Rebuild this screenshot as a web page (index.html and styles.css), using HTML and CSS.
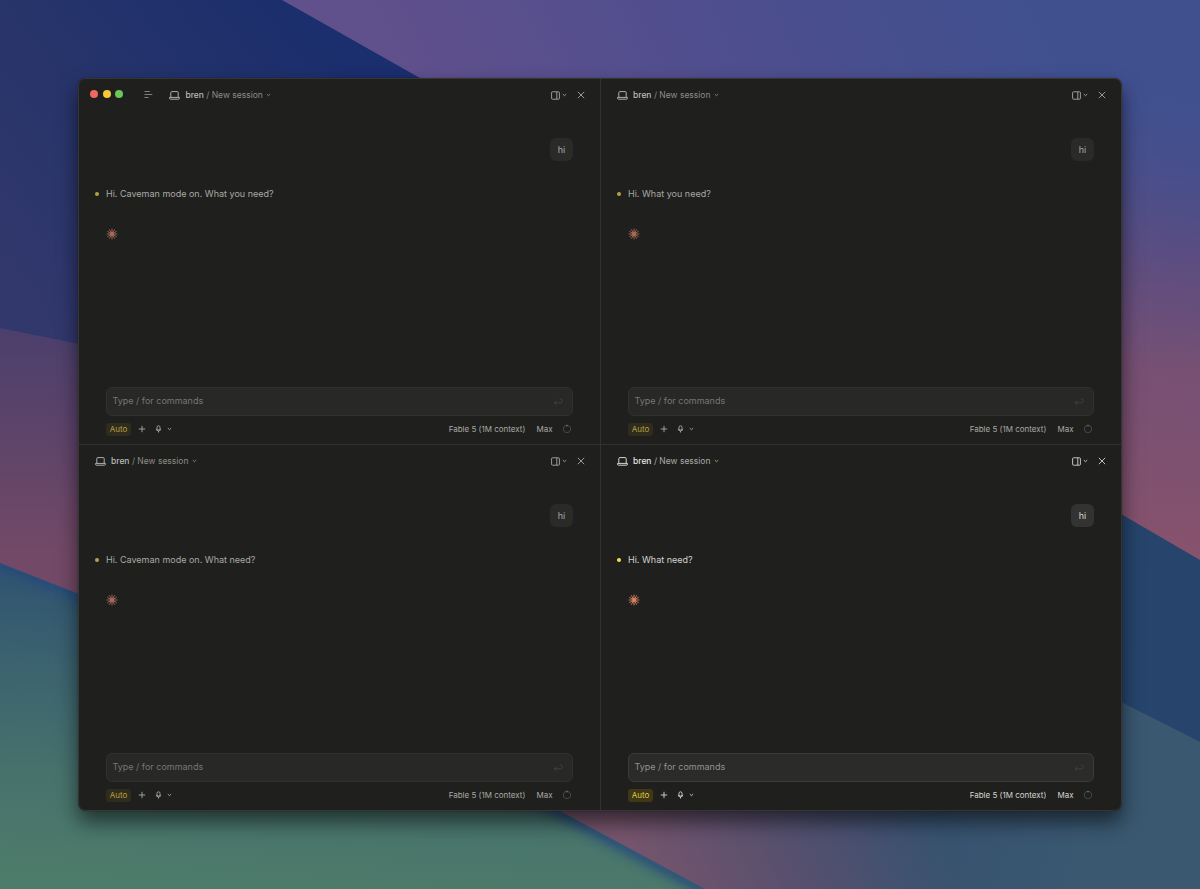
FILE: index.html
```html
<!DOCTYPE html>
<html lang="en">
<head>
  <meta charset="UTF-8" />
  <meta name="viewport" content="width=device-width, initial-scale=1.0" />
  <title>Sessions</title>
  <link rel="stylesheet" href="styles.css">
</head>

<body>
  <!-- Wallpaper -->
  <svg class="wallpaper" viewBox="0 0 1200 889" preserveAspectRatio="none" aria-hidden="true">
    <defs>
      <linearGradient id="navy" gradientUnits="userSpaceOnUse" x1="330" y1="40" x2="0" y2="300">
        <stop offset="0" stop-color="#1b2e6d" />
        <stop offset="0.55" stop-color="#27346a" />
        <stop offset="1" stop-color="#33386c" />
      </linearGradient>
      <linearGradient id="violet" gradientUnits="userSpaceOnUse" x1="440" y1="150" x2="980" y2="-100">
        <stop offset="0" stop-color="#60508c" />
        <stop offset="0.5" stop-color="#4f4e8e" />
        <stop offset="1" stop-color="#40508f" />
      </linearGradient>
      <linearGradient id="rose" gradientUnits="userSpaceOnUse" x1="1175" y1="100" x2="1125" y2="540">
        <stop offset="0" stop-color="#4c4e8b" stop-opacity="0" />
        <stop offset="0.35" stop-color="#5b4d81" />
        <stop offset="0.6" stop-color="#765074" />
        <stop offset="1" stop-color="#86526d" />
      </linearGradient>
      <linearGradient id="plum" x1="0" y1="0" x2="0" y2="1">
        <stop offset="0" stop-color="#4b3f6c" />
        <stop offset="0.6" stop-color="#724967" />
        <stop offset="1" stop-color="#724967" />
      </linearGradient>
      <linearGradient id="green" gradientUnits="userSpaceOnUse" x1="80" y1="570" x2="60" y2="880">
        <stop offset="0" stop-color="#2f5370" />
        <stop offset="0.3" stop-color="#3b626f" />
        <stop offset="0.65" stop-color="#46716c" />
        <stop offset="1" stop-color="#4e7c6a" />
      </linearGradient>
      <linearGradient id="dusk" gradientUnits="userSpaceOnUse" x1="640" y1="870" x2="900" y2="740">
        <stop offset="0" stop-color="#76546c" />
        <stop offset="0.45" stop-color="#58506e" />
        <stop offset="1" stop-color="#36506f" />
      </linearGradient>
      <linearGradient id="teal" gradientUnits="userSpaceOnUse" x1="900" y1="740" x2="1110" y2="810">
        <stop offset="0" stop-color="#3a5870" stop-opacity="0" />
        <stop offset="1" stop-color="#3a5870" />
      </linearGradient>
      <linearGradient id="blue" x1="0" y1="0" x2="0" y2="1">
        <stop offset="0" stop-color="#26436c" />
        <stop offset="1" stop-color="#26456c" />
      </linearGradient>
      <clipPath id="hill">
        <path d="M0 563L79 594L300 690L560 811L705 889H0Z" />
      </clipPath>
      <filter id="soft" x="-5%" y="-20%" width="110%" height="140%">
        <feGaussianBlur stdDeviation="6" />
      </filter>
    </defs>
    <rect width="1200" height="889" fill="url(#violet)" />
    <rect x="1000" width="200" height="600" fill="url(#rose)" />
    <path d="M0 0H282L420 78L700 240V600H0Z" fill="url(#navy)" />
    <path d="M0 328L79 344L400 420V700H0Z" fill="url(#plum)" />
    <path d="M600 300L1121 514L1200 560V889H600Z" fill="url(#blue)" />
    <path d="M500 700H1117L1200 742V889H500Z" fill="url(#dusk)" />
    <path d="M900 600L1117 700L1200 742V889H850Z" fill="url(#teal)" />
    <g clip-path="url(#hill)">
      <path d="M0 563L79 594L300 690L560 811L705 889H0Z" fill="url(#green)" />
      <path d="M-40 547L0 563L79 594L300 690L560 811L745 911" fill="none" stroke="#27497a" stroke-width="12" filter="url(#soft)" />
    </g>
  </svg>

  <!-- Icons -->
  <svg class="sprite" aria-hidden="true">
    <symbol id="i-laptop" viewBox="0 0 11 9">
      <path d="M1.8 6.3V1.6Q1.8 .6 2.8 .6H8.2Q9.2 .6 9.2 1.6V6.3M.6 6.4H10.4V7.4Q10.4 8.2 9.6 8.2H1.4Q.6 8.2 .6 7.4Z" />
    </symbol>
    <symbol id="i-menu" viewBox="0 0 9 8">
      <path d="M.5 1.5H5.8M.5 4.5H8.3M.5 7.5H4.6" />
    </symbol>
    <symbol id="i-chevron" viewBox="0 0 5 4">
      <path d="M.8 1.1L2.5 2.7L4.2 1.1" />
    </symbol>
    <symbol id="i-panel" viewBox="0 0 9 9">
      <rect x=".6" y=".8" width="7.8" height="7.4" rx=".8" />
      <path d="M5.8 .8V8.2" />
    </symbol>
    <symbol id="i-close" viewBox="0 0 8 8">
      <path d="M.8 .8L7.2 7.2M7.2 .8L.8 7.2" />
    </symbol>
    <symbol id="i-plus" viewBox="0 0 8 8">
      <path d="M4 .8V7.2M.8 4H7.2" />
    </symbol>
    <symbol id="i-mic" viewBox="0 0 7 8">
      <rect x="2" y=".8" width="3" height="4.2" rx="1.5" />
      <path d="M1.2 3.8Q1.2 5.9 3.5 5.9Q5.8 5.9 5.8 3.8M3.5 5.9V7.5" />
    </symbol>
    <symbol id="i-return" viewBox="0 0 10 8">
      <path d="M6.7 1H7.8Q9 1 9 2.2V3.6Q9 4.8 7.8 4.8H1.3M3.3 2.7L1.2 4.8L3.3 6.9" />
    </symbol>
    <symbol id="i-ring" viewBox="0 0 10 10">
      <circle cx="5" cy="5" r="3.7" />
      <path class="ring-mark" d="M5 .8V2.4" />
    </symbol>
    <symbol id="i-burst" viewBox="0 0 12 12">
      <circle class="burst-core" cx="6" cy="6" r="2.2" />
      <path d="M6 .6V11.4M.6 6H11.4M3.3 1.3L8.7 10.7M8.7 1.3L3.3 10.7M1.3 3.3L10.7 8.7M10.7 3.3L1.3 8.7" />
    </symbol>
  </svg>

  <div class="window">
    <section class="pane">
      <header class="pane-header">
        <div class="traffic">
          <span class="light red"></span>
          <span class="light yellow"></span>
          <span class="light green"></span>
        </div>
        <svg class="icon menu"><use href="#i-menu" /></svg>
        <svg class="icon laptop"><use href="#i-laptop" /></svg>
        <div class="title"><b>bren</b> / New session</div>
        <svg class="icon chevron"><use href="#i-chevron" /></svg>
        <div class="actions">
          <svg class="icon panel"><use href="#i-panel" /></svg>
          <svg class="icon chevron"><use href="#i-chevron" /></svg>
          <svg class="icon close"><use href="#i-close" /></svg>
        </div>
      </header>
      <div class="chat">
        <div class="bubble">hi</div>
        <div class="reply"><span class="dot"></span>Hi. Caveman mode on. What you need?</div>
        <svg class="burst"><use href="#i-burst" /></svg>
      </div>
      <div class="prompt"><span>Type / for commands</span><svg class="icon return"><use href="#i-return" /></svg></div>
      <footer class="toolbar">
        <span class="mode">Auto</span>
        <svg class="icon plus"><use href="#i-plus" /></svg>
        <svg class="icon mic"><use href="#i-mic" /></svg>
        <svg class="icon chevron"><use href="#i-chevron" /></svg>
        <span class="model">Fable 5 (1M context)</span>
        <span class="effort">Max</span>
        <svg class="icon ring"><use href="#i-ring" /></svg>
      </footer>
    </section>

    <section class="pane">
      <header class="pane-header">
        <svg class="icon laptop"><use href="#i-laptop" /></svg>
        <div class="title"><b>bren</b> / New session</div>
        <svg class="icon chevron"><use href="#i-chevron" /></svg>
        <div class="actions">
          <svg class="icon panel"><use href="#i-panel" /></svg>
          <svg class="icon chevron"><use href="#i-chevron" /></svg>
          <svg class="icon close"><use href="#i-close" /></svg>
        </div>
      </header>
      <div class="chat">
        <div class="bubble">hi</div>
        <div class="reply"><span class="dot"></span>Hi. What you need?</div>
        <svg class="burst"><use href="#i-burst" /></svg>
      </div>
      <div class="prompt"><span>Type / for commands</span><svg class="icon return"><use href="#i-return" /></svg></div>
      <footer class="toolbar">
        <span class="mode">Auto</span>
        <svg class="icon plus"><use href="#i-plus" /></svg>
        <svg class="icon mic"><use href="#i-mic" /></svg>
        <svg class="icon chevron"><use href="#i-chevron" /></svg>
        <span class="model">Fable 5 (1M context)</span>
        <span class="effort">Max</span>
        <svg class="icon ring"><use href="#i-ring" /></svg>
      </footer>
    </section>

    <section class="pane">
      <header class="pane-header">
        <svg class="icon laptop"><use href="#i-laptop" /></svg>
        <div class="title"><b>bren</b> / New session</div>
        <svg class="icon chevron"><use href="#i-chevron" /></svg>
        <div class="actions">
          <svg class="icon panel"><use href="#i-panel" /></svg>
          <svg class="icon chevron"><use href="#i-chevron" /></svg>
          <svg class="icon close"><use href="#i-close" /></svg>
        </div>
      </header>
      <div class="chat">
        <div class="bubble">hi</div>
        <div class="reply"><span class="dot"></span>Hi. Caveman mode on. What need?</div>
        <svg class="burst"><use href="#i-burst" /></svg>
      </div>
      <div class="prompt"><span>Type / for commands</span><svg class="icon return"><use href="#i-return" /></svg></div>
      <footer class="toolbar">
        <span class="mode">Auto</span>
        <svg class="icon plus"><use href="#i-plus" /></svg>
        <svg class="icon mic"><use href="#i-mic" /></svg>
        <svg class="icon chevron"><use href="#i-chevron" /></svg>
        <span class="model">Fable 5 (1M context)</span>
        <span class="effort">Max</span>
        <svg class="icon ring"><use href="#i-ring" /></svg>
      </footer>
    </section>

    <!-- Focused pane -->
    <section class="pane active">
      <header class="pane-header">
        <svg class="icon laptop"><use href="#i-laptop" /></svg>
        <div class="title"><b>bren</b> / New session</div>
        <svg class="icon chevron"><use href="#i-chevron" /></svg>
        <div class="actions">
          <svg class="icon panel"><use href="#i-panel" /></svg>
          <svg class="icon chevron"><use href="#i-chevron" /></svg>
          <svg class="icon close"><use href="#i-close" /></svg>
        </div>
      </header>
      <div class="chat">
        <div class="bubble">hi</div>
        <div class="reply"><span class="dot"></span>Hi. What need?</div>
        <svg class="burst"><use href="#i-burst" /></svg>
      </div>
      <div class="prompt"><span>Type / for commands</span><svg class="icon return"><use href="#i-return" /></svg></div>
      <footer class="toolbar">
        <span class="mode">Auto</span>
        <svg class="icon plus"><use href="#i-plus" /></svg>
        <svg class="icon mic"><use href="#i-mic" /></svg>
        <svg class="icon chevron"><use href="#i-chevron" /></svg>
        <span class="model">Fable 5 (1M context)</span>
        <span class="effort">Max</span>
        <svg class="icon ring"><use href="#i-ring" /></svg>
      </footer>
    </section>
  </div>
</body>
</html>
```

FILE: styles.css
```css
* {
  box-sizing: border-box;
}

body {
  --text: #a9a9a6;
  --muted: #8c8c89;
  --strong: #bdbdba;
  margin: 0;
  padding: 78px;
  height: 889px;
  overflow: hidden;
  background: #35406f;
  font-family: Inter, sans-serif;
  font-size: 9px;
  line-height: 12px;
}

.wallpaper {
  position: absolute;
  top: 0;
  left: 0;
  width: 1200px;
  height: 889px;
  z-index: -1;
}

.sprite {
  position: absolute;
  width: 0;
  height: 0;
}

.window {
  width: 1044px;
  height: 733px;
  display: grid;
  grid-template-columns: 521px 520px;
  grid-template-rows: 365px 365px;
  gap: 1px;
  border: 1px solid #363734;
  border-radius: 8px;
  background: #323230;
  overflow: hidden;
  box-shadow: 0 0 1px rgba(0, 0, 0, 0.7), 0 11px 20px rgba(0, 0, 0, 0.55);
}

.pane {
  display: flex;
  flex-direction: column;
  background: #1f1f1d;
  color: var(--text);
}

.pane.active {
  --text: #d4d4d0;
  --muted: #aaaaa6;
  --strong: #e8e8e4;
}

.icon {
  flex: none;
  fill: none;
  stroke: currentColor;
  stroke-width: 0.9;
}

/* Header */
.pane-header {
  display: flex;
  align-items: center;
  height: 32px;
  padding: 0 16px;
  color: var(--muted);
}

.traffic {
  display: flex;
  gap: 4.7px;
  margin: -2px 20.5px 0 -5px;
}

.light {
  width: 8px;
  height: 8px;
  border-radius: 50%;
}

.red { background: #ec6a5f; }
.yellow { background: #f5cb35; }
.green { background: #6cc658; }

.menu {
  width: 9px;
  height: 8px;
  margin: -2px 16.5px 0 0;
}

.laptop {
  width: 11px;
  height: 9px;
  margin: 0 5px 0 0;
  color: var(--strong);
}

.title {
  font-size: 8.5px;
  white-space: nowrap;
}

.title b {
  font-weight: 500;
  color: var(--strong);
}

.chevron {
  width: 5px;
  height: 4px;
  margin-left: 3.5px;
}

.actions {
  display: flex;
  align-items: center;
  margin: 0 -0.5px 0 auto;
  color: var(--text);
}

.actions .chevron {
  margin-left: 2px;
}

.panel {
  width: 9px;
  height: 9px;
}

.close {
  width: 8px;
  height: 8px;
  margin-left: 10px;
}

/* Messages */
.chat {
  flex: 1;
  display: flex;
  flex-direction: column;
  padding: 27px 27px 0;
}

.bubble {
  align-self: flex-end;
  width: 23px;
  height: 23px;
  border-radius: 6px;
  background: #2a2a28;
  line-height: 23px;
  text-align: center;
}

.active .bubble {
  background: #333331;
}

.reply {
  display: flex;
  align-items: center;
  margin-top: 27px;
}

.dot {
  width: 4px;
  height: 4px;
  margin: 0 7px 0 -11px;
  border-radius: 50%;
  background: #b5a142;
}

.active .dot {
  background: #f3df4b;
}

.burst {
  width: 12px;
  height: 12px;
  margin: 27.5px 0 0 -0.5px;
  stroke: #a86b55;
  stroke-width: 0.9;
}

.active .burst {
  stroke: #dc8463;
}

.burst-core {
  fill: #a86b55;
  stroke: none;
}

/* Prompt */
.prompt {
  display: flex;
  align-items: center;
  justify-content: space-between;
  height: 29px;
  margin: 0 27px;
  padding: 0 9px 1px 5.5px;
  border: 1px solid #30302e;
  border-radius: 6px;
  background: #282826;
  color: #777774;
}

.active .prompt {
  border-color: #3b3b38;
  background: #2b2b29;
  color: #92928f;
}

.return {
  width: 10px;
  height: 8px;
  margin-top: 2px;
  color: #434341;
}

.toolbar {
  display: flex;
  align-items: center;
  height: 28px;
  padding: 0 27px 2px;
  font-size: 8px;
}

.mode {
  width: 25px;
  height: 13px;
  border-radius: 3px;
  background: #302c1d;
  color: #b5a142;
  line-height: 13px;
  text-align: center;
}

.active .mode {
  background: #403814;
  color: #dfcb4c;
}

.plus {
  width: 8px;
  height: 8px;
  margin-left: 6.5px;
}

.mic {
  width: 7px;
  height: 8px;
  margin-left: 9px;
}

.toolbar .chevron {
  margin-left: 5px;
}

.model {
  margin-left: auto;
}

.effort {
  margin: 0 9px 0 11px;
}

.ring {
  width: 10px;
  height: 10px;
  margin-right: 1.5px;
  color: #4b4b49;
}

.ring-mark {
  stroke: #888885;
}
```
